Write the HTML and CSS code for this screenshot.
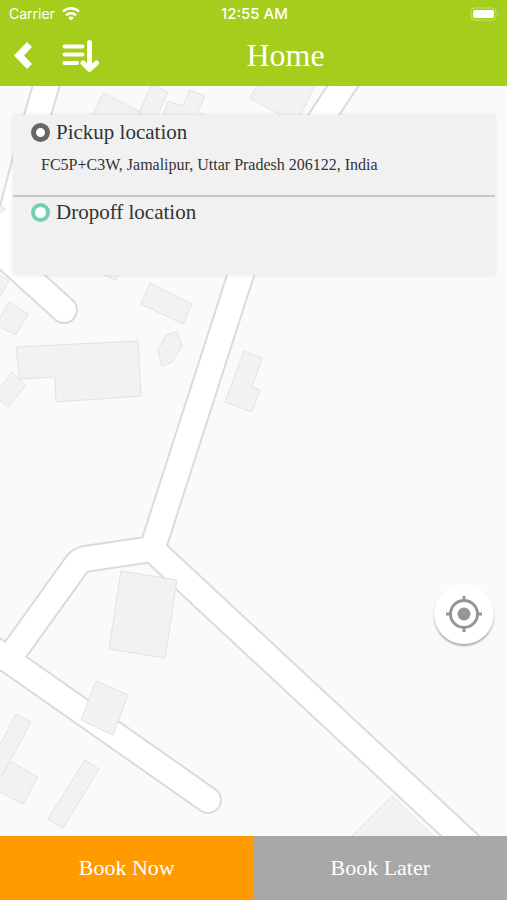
FILE: index.html
```html
<!DOCTYPE html>
<html lang="en">
<head>
  <meta charset="UTF-8">
  <meta name="viewport" content="width=device-width, initial-scale=1">
  <title>Home</title>
  <link rel="stylesheet" href="styles.css">
</head>
<body>

  <header class="header">
    <div class="status-bar">
      <div class="carrier">
        <span>Carrier</span>
        <svg width="18" height="14" viewBox="0 0 18 14" fill="none" stroke="#fff" stroke-width="2.4">
          <path d="M1 4.5 A11.5 11.5 0 0 1 17 4.5"/>
          <path d="M4 8.3 A7 7 0 0 1 14 8.3"/>
          <path d="M9 13.5 L6 10.8 A4.5 4.5 0 0 1 12 10.8 Z" fill="#fff" stroke="none"/>
        </svg>
      </div>
      <span class="time">12:55 AM</span>
      <svg class="battery" width="30" height="14" viewBox="0 0 30 14">
        <rect x="1" y="1" width="25" height="12" rx="4" fill="none" stroke="#c5e070" stroke-width="1"/>
        <rect x="3" y="3" width="21" height="8" rx="2" fill="#fff"/>
        <path d="M28 5 Q30 7 28 9 Z" fill="#c5e070"/>
      </svg>
    </div>
    <div class="nav-bar">
      <div class="nav-actions">
        <button class="icon-btn" aria-label="Back">
          <svg width="20" height="28" viewBox="0 0 20 28">
            <path d="M13 0 L18 5 L10 13.5 L18 22 L13 27 L0 13.5 Z" fill="#fff"/>
          </svg>
        </button>
        <button class="icon-btn" aria-label="Sort">
          <svg width="38" height="34" viewBox="0 0 38 34" fill="none" stroke="#fff" stroke-linecap="round" stroke-linejoin="round">
            <path d="M2.5 7.5 H20.5 M2.5 15.5 H20.5 M2.5 24 H15" stroke-width="4"/>
            <path d="M27.5 3.5 V30 M21 24 L27.5 30.5 L34.5 24" stroke-width="5"/>
          </svg>
        </button>
      </div>
      <h1>Home</h1>
    </div>
  </header>

  <main class="map-area">
    <svg class="map" viewBox="0 86 507 750" preserveAspectRatio="xMidYMid slice" aria-hidden="true">
      <defs>
        <g id="roads">
          <path d="M49 76 L37 117 L14 204 L4 250"/>
          <path d="M-20 234 L64 310"/>
          <path d="M356 66 L323 116 L260 215 L240 277 L152 550"/>
          <path d="M152 549 L471 846"/>
          <path d="M152 549 L85 559 Q80 560 77 564 L8 660"/>
          <path d="M-20 640 L208 800"/>
        </g>
      </defs>
      <use href="#roads" class="road-edge"/>
      <use href="#roads" class="road"/>

      <g class="buildings">
        <path d="M88 124 L103 93 L165 124 Z"/>
        <path d="M160 124 L168 101 L183 106 L190 90 L205 96 L198 112 L225 124 Z"/>
        <path d="M139 113 L152 84 L168 92 L155 121 Z"/>
        <path d="M250 98 L260 80 L318 80 L296 124 Z"/>
        <path d="M-5 203 L6 209 L-5 216 Z"/>
        <path d="M-5 272 L9 281 L-5 305 Z"/>
        <path d="M104 270 L104 275 L116 280 L120 272 Z"/>
        <path d="M9 302 L28 314 L16 335 L-4 325 Z"/>
        <path d="M150 283 L192 304 L183 324 L141 304 Z"/>
        <path d="M166 335 L177 332 L182 346 L172 362 L162 366 L158 350 Z"/>
        <path d="M16 347 L138 341 L141 396 L56 402 L55 377 L20 379 Z"/>
        <path d="M12 372 L26 385 L8 407 L-6 396 Z"/>
        <path d="M244 351 L262 358 L252 387 L260 390 L252 412 L225 402 Z"/>
        <path d="M121 571 L177 580 L165 658 L109 649 Z"/>
        <path d="M96 681 L128 695 L113 735 L81 720 Z"/>
        <path d="M10 761 L38 777 L23 804 L-6 789 Z"/>
        <path d="M16 714 L31 722 L2 776 L-12 768 Z"/>
        <path d="M85 760 L99 769 L63 828 L48 819 Z"/>
        <path d="M347 841 L392 796 L438 841 Z"/>
      </g>
    </svg>

    <form class="location-card">
      <div class="location">
        <label for="pickup"><span class="ring"></span>Pickup location</label>
        <input type="text" id="pickup" value="FC5P+C3W, Jamalipur, Uttar Pradesh 206122, India">
      </div>
      <div class="location">
        <label for="dropoff"><span class="ring ring-green"></span>Dropoff location</label>
        <input type="text" id="dropoff">
      </div>
    </form>

    <button class="locate-btn" aria-label="My location">
      <svg width="36" height="36" viewBox="0 0 36 36" fill="none" stroke="#959595" stroke-width="3">
        <circle cx="18" cy="18" r="13.5"/>
        <circle cx="18" cy="18" r="6.5" fill="#959595" stroke="none"/>
        <path d="M18 0 V5 M18 31 V36 M0 18 H5 M31 18 H36"/>
      </svg>
    </button>
  </main>

  <footer class="book-bar">
    <button class="book-now">Book Now</button>
    <button class="book-later">Book Later</button>
  </footer>

</body>
</html>
```

FILE: styles.css
```css
* {
  box-sizing: border-box;
}

body {
  margin: 0;
  min-height: 100vh;
  display: flex;
  flex-direction: column;
  font-family: Georgia, "Liberation Serif", serif;
  color: #333;
}

button {
  border: none;
  padding: 0;
  font-family: inherit;
  cursor: pointer;
}

/* header */
.header {
  background: #a4cd1c;
  color: #fff;
}

.status-bar {
  display: grid;
  grid-template-columns: 1fr auto 1fr;
  align-items: center;
  height: 27px;
  padding: 0 7px 0 9px;
  font-family: Inter, "Liberation Sans", sans-serif;
  font-size: 14px;
}

.carrier {
  display: flex;
  align-items: center;
  gap: 7px;
}

.time {
  font-size: 15px;
  font-weight: 500;
}

.battery {
  justify-self: end;
}

.nav-bar {
  display: flex;
  align-items: center;
  height: 59px;
  padding: 0 36px 2px 14px;
}

.nav-actions {
  display: flex;
  align-items: center;
  gap: 28px;
}

.icon-btn {
  display: flex;
  background: none;
}

.nav-bar h1 {
  flex: 1;
  margin: 0;
  font-size: 32px;
  font-weight: normal;
  text-align: center;
}

/* map */
.map-area {
  position: relative;
  flex: 1;
  overflow: hidden;
  background: #f8fafb;
}

.map {
  position: absolute;
  width: 100%;
  height: 100%;
}

.road-edge,
.road {
  fill: none;
  stroke-linecap: round;
  stroke-linejoin: miter;
}

.road-edge {
  stroke: #dadcdc;
  stroke-width: 28px;
}

.road {
  stroke: #fff;
  stroke-width: 24px;
}

.buildings {
  fill: #f1f2f3;
  stroke: #e0e2e3;
  stroke-width: 1px;
}

.location-card {
  position: absolute;
  top: 29px;
  left: 13px;
  right: 12px;
  background: #f1f1f1;
  border-radius: 3px;
  box-shadow: 0 0 4px rgba(0, 0, 0, 0.1);
}

.location {
  height: 80px;
  padding: 3px 18px;
}

.location + .location {
  padding-top: 1px;
  border-top: 2px solid #c8c8c8;
}

.location label {
  display: flex;
  align-items: center;
  gap: 6px;
  height: 28px;
  font-size: 21px;
}

.location input {
  width: 100%;
  height: 38px;
  padding: 0 10px;
  border: none;
  outline: none;
  background: none;
  font-family: inherit;
  font-size: 16px;
  color: #333;
}

.ring {
  width: 19px;
  height: 19px;
  border: 5px solid #666;
  border-radius: 50%;
  background: #fff;
}

.ring-green {
  border: 4px solid #72d0ae;
}

.locate-btn {
  position: absolute;
  right: 13px;
  bottom: 192px;
  display: flex;
  align-items: center;
  justify-content: center;
  width: 60px;
  height: 60px;
  border-radius: 50%;
  background: #fff;
  box-shadow: 0 2px 2px rgba(0, 0, 0, 0.3);
}

/* bottom buttons */
.book-bar {
  display: grid;
  grid-template-columns: 1fr 1fr;
  height: 64px;
}

.book-bar button {
  color: #fff;
  font-size: 22px;
}

.book-now {
  background: #ff9b00;
}

.book-later {
  background: #a8a8a8;
}
```
